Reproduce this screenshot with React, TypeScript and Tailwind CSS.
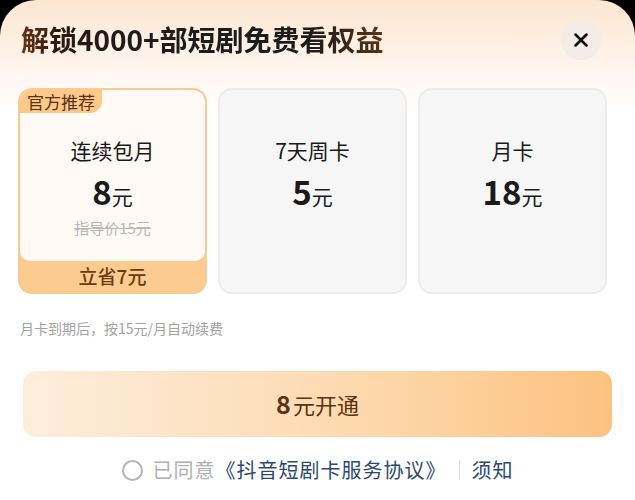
import { X } from "lucide-react";

const plans = [
  { name: "7天周卡", price: "5" },
  { name: "月卡", price: "18" },
];

export default function App() {
  return (
    <div className="h-[500px] w-[635px] overflow-hidden bg-black font-['Noto_Sans_CJK_SC','Noto_Sans',sans-serif]">
      <div className="flex h-full flex-col rounded-t-[36px] bg-[linear-gradient(180deg,#fde6d1_0%,#fef3ea_12%,#ffffff_22%)]">
        <div className="flex h-[88px] items-start justify-between pl-[21px] pr-[34px] pt-[20px]">
          <h1 className="bg-[linear-gradient(90deg,#6a3410_0%,#2a1a12_10%,#1c1c1c_30%,#1c1c1c_80%,#5a3417_100%)] bg-clip-text text-[28px] leading-[38px] font-bold text-transparent">
            解锁4000+部短剧免费看权益
          </h1>
          <button className="flex h-[40px] w-[40px] items-center justify-center rounded-full bg-[#f4ece6]">
            <X size={22} strokeWidth={2.8} className="text-[#111]" />
          </button>
        </div>

        <div className="flex gap-[11px] px-[18px]">
          <div className="flex h-[206px] w-[189px] flex-col overflow-hidden rounded-[14px] border-2 border-[#f8cb91] bg-[#fccb8f]">
            <div className="relative flex flex-1 flex-col items-center rounded-b-[10px] bg-[#fffaf5] pt-[46px]">
              <div className="absolute left-0 top-0 rounded-br-[12px] bg-[#fcc98a] px-[7px] py-[0px] text-[17px] leading-[23px] text-[#5a3210]">
                官方推荐
              </div>
              <div className="text-[21px] leading-[28px] text-[#1a1a1a]">连续包月</div>
              <div className="mt-[9px] flex items-baseline leading-[36px] text-[#1a1a1a]">
                <span className="text-[33px] font-bold">8</span>
                <span className="text-[21px]">元</span>
              </div>
              <div className="mt-[3px] text-[15px] leading-[22px] text-[#b8b8b8] line-through">指导价15元</div>
            </div>
            <div className="flex h-[31px] items-center justify-center text-[19px] font-medium text-[#6b3a12]">立省7元</div>
          </div>
          {plans.map((p) => (
            <div
              key={p.name}
              className="flex h-[206px] w-[189px] flex-col items-center rounded-[14px] border-2 border-[#ececec] bg-[#f6f6f6] pt-[46px]"
            >
              <div className="text-[21px] leading-[28px] text-[#1a1a1a]">{p.name}</div>
              <div className="mt-[9px] flex items-baseline leading-[36px] text-[#1a1a1a]">
                <span className="text-[33px] font-bold">{p.price}</span>
                <span className="text-[21px]">元</span>
              </div>
            </div>
          ))}
        </div>

        <p className="mt-[24px] pl-[20px] text-[14px] leading-[20px] text-[#a3a3a3]">月卡到期后，按15元/月自动续费</p>

        <button className="mx-[23px] mt-[33px] flex h-[66px] items-center justify-center rounded-[13px] bg-[linear-gradient(90deg,#fdeedd_0%,#fdd9af_55%,#fcc27f_100%)] text-[#5b3412]">
          <span className="text-[25px] font-bold">8</span>
          <span className="ml-[2px] text-[22px]">元开通</span>
        </button>

        <div className="mt-[20px] flex items-center justify-center text-[20px] leading-[26px] tracking-[1px]">
          <span className="mr-[10px] h-[21px] w-[21px] rounded-full border-2 border-[#b5b5b5]" />
          <span className="text-[#b0b0b0]">已同意</span>
          <span className="text-[#2b4a6f]">《抖音短剧卡服务协议》</span>
          <span className="mx-[12px] h-[20px] w-px bg-[#dcdcdc]" />
          <span className="text-[#2b4a6f]">须知</span>
        </div>
      </div>
    </div>
  );
}
